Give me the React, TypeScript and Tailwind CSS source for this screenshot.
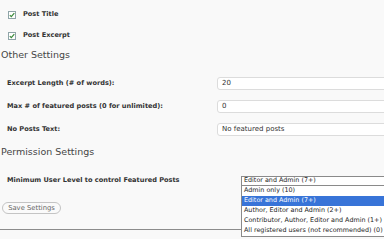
const labelFont = "font-['Verdana','DejaVu_Sans',sans-serif]";

function Check() {
  return (
    <svg width="8" height="8" viewBox="0 0 8 8" className="shrink-0">
      <rect x="0.5" y="0.5" width="7" height="7" fill="#fff" stroke="#8fa4a8" />
      <path d="M1.8 4.2 L3.3 5.7 L6.3 2.2" fill="none" stroke="#3a8a3a" strokeWidth="1.2" />
    </svg>
  );
}

function FieldRow({ label, value }: { label: string; value: string }) {
  return (
    <div className="flex h-[23px] items-center">
      <div className="w-[217px] shrink-0 pl-[7px] text-[6.6px] font-bold text-[#333]">{label}</div>
      <div className="flex h-[13px] w-[200px] shrink-0 items-center rounded-[3px] border border-[#dcdcdc] bg-white pl-[4px] text-[7px] text-[#333]">
        {value}
      </div>
    </div>
  );
}

const levels = [
  'Admin only (10)',
  'Editor and Admin (7+)',
  'Author, Editor and Admin (2+)',
  'Contributor, Author, Editor and Admin (1+)',
  'All registered users (not recommended) (0)',
];

export default function App() {
  return (
    <div className={`relative h-[239px] w-[384px] overflow-hidden bg-[#f9f9f9] ${labelFont}`}>
      <div className="pt-[4px]">
        <div className="flex h-[21px] items-center gap-[7px] pl-[8px] text-[6.6px] font-bold text-[#333]">
          <Check />
          Post Title
        </div>
        <div className="flex h-[21px] items-center gap-[7px] pl-[8px] text-[6.6px] font-bold text-[#333]">
          <Check />
          Post Excerpt
        </div>
      </div>

      <div className="flex h-[18px] items-center pl-[1px] font-['DejaVu_Sans',sans-serif] text-[9.5px] text-[#464646]">
        Other Settings
      </div>

      <div className="mt-[8px]">
        <FieldRow label="Excerpt Length (# of words):" value="20" />
        <FieldRow label="Max # of featured posts (0 for unlimited):" value="0" />
        <FieldRow label="No Posts Text:" value="No featured posts" />
      </div>

      <div className="flex h-[22px] items-center pl-[1px] font-['DejaVu_Sans',sans-serif] text-[9.5px] text-[#464646]">
        Permission Settings
      </div>

      <div className="mt-[8px] flex h-[20px] items-center">
        <div className="w-[241px] shrink-0 pl-[7px] text-[6.6px] font-bold text-[#333]">
          Minimum User Level to control Featured Posts
        </div>
        <div className="flex h-[11px] w-[160px] shrink-0 items-center border border-[#8a8a8a] bg-white pl-[2px] text-[6.4px] text-[#222]">
          Editor and Admin (7+)
        </div>
      </div>

      <div className="mt-[11px] pl-[2px]">
        <button
          type="button"
          className="flex h-[12px] w-[59px] items-center justify-center rounded-full border border-[#c4c4c4] bg-[#fafafa] text-[6.8px] text-[#666]"
        >
          Save Settings
        </button>
      </div>

      <div className="mt-[15px] h-px w-full bg-[#8c8c8c]" />

      <div className="absolute left-[241px] top-[185px] w-[160px] border border-[#8a8a8a] bg-white text-[6.4px] text-[#222]">
        {levels.map((l, i) => (
          <div
            key={l}
            className={`flex h-[10px] items-center whitespace-nowrap pl-[2px] ${i === 1 ? 'bg-[#3874d8] text-white' : ''}`}
          >
            {l}
          </div>
        ))}
      </div>
    </div>
  );
}
